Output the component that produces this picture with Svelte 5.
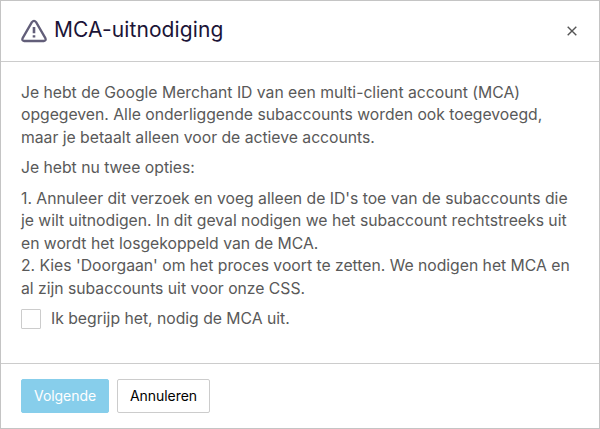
<script>
    let accepted = $state(false);
</script>

<main class="modal">
    <header>
        <svg class="warning" viewBox="0 0 26 24" aria-hidden="true">
            <path d="M10.9 3.1 L1.8 18.8 Q0.4 21.8 3.2 22 H22.8 Q25.6 21.8 24.2 18.8 L15.1 3.1 Q13 0.5 10.9 3.1 Z" />
            <path class="mark" d="M13 8 V14.2 M13 16.3 V18.5" />
        </svg>
        <h1>MCA-uitnodiging</h1>
        <button class="close" aria-label="Sluiten">
            <svg viewBox="0 0 10 10"><path d="M0.7 0.7 L9.3 9.3 M9.3 0.7 L0.7 9.3" /></svg>
        </button>
    </header>

    <section>
        <p>Je hebt de Google Merchant ID van een multi-client account (MCA) opgegeven. Alle onderliggende subaccounts worden ook toegevoegd, maar je betaalt alleen voor de actieve accounts.</p>
        <p>Je hebt nu twee opties:</p>
        <p>
            1. Annuleer dit verzoek en voeg alleen de ID's toe van de subaccounts die je wilt uitnodigen. In dit geval nodigen we het subaccount rechtstreeks uit en wordt het losgekoppeld van de MCA.<br>
            2. Kies 'Doorgaan' om het proces voort te zetten. We nodigen het MCA en al zijn subaccounts uit voor onze CSS.
        </p>
        <label>
            <input type="checkbox" bind:checked={accepted}>
            <span>Ik begrijp het, nodig de MCA uit.</span>
        </label>
    </section>

    <footer>
        <button class="primary" disabled={!accepted}>Volgende</button>
        <button class="secondary">Annuleren</button>
    </footer>
</main>

<style>
    :global(body) {
        background: #fff;
    }

    .modal {
        box-sizing: border-box;
        width: 600px;
        height: 429px;
        display: flex;
        flex-direction: column;
        border: 1px solid #c4c4c4;
        font-family: Inter, sans-serif;
        font-size: 15.75px;
        font-weight: 370;
        letter-spacing: -0.02px;
        line-height: 22.5px;
        color: #595959;
    }

    header {
        box-sizing: border-box;
        height: 61px;
        display: flex;
        align-items: center;
        padding: 0 20px;
        border-bottom: 1px solid #ccc;
    }

    .warning {
        width: 26px;
        height: 24px;
        margin-right: 7px;
        fill: none;
        stroke: #625e79;
        stroke-width: 2.3;
        stroke-linecap: round;
    }

    .warning .mark {
        stroke-width: 2.6;
        stroke-linecap: butt;
    }

    h1 {
        margin: 0 0 1px;
        font-size: 21px;
        font-weight: 370;
        letter-spacing: 0.1px;
        color: #1b1437;
    }

    .close {
        margin-left: auto;
        padding: 0;
        border: 0;
        background: none;
        display: flex;
    }

    .close svg {
        width: 10px;
        height: 10px;
        margin-right: 2.5px;
        stroke: #555;
        stroke-width: 1.4;
    }

    section {
        flex: 1;
        padding: 19.5px 20px 0;
    }

    p {
        margin: 0 0 8px;
    }

    label {
        display: flex;
        align-items: center;
        gap: 10px;
        margin-top: -0.5px;
    }

    input {
        appearance: none;
        box-sizing: border-box;
        width: 20px;
        height: 20px;
        margin: 0;
        border: 1px solid #ccc;
        border-radius: 1px;
        background: #fff;
    }

    input:checked {
        background: #87ceeb;
    }

    footer {
        box-sizing: border-box;
        height: 65px;
        display: flex;
        gap: 8px;
        padding: 15px 20px;
        border-top: 1px solid #ccc;
    }

    footer button {
        box-sizing: border-box;
        height: 34px;
        padding: 0 12px 1px;
        border: 1px solid #ccc;
        border-radius: 2px;
        background: #fff;
        font: 370 14px Inter, sans-serif;
        letter-spacing: -0.06px;
        color: #000;
    }

    footer .primary {
        border-color: #87ceeb;
        background: #87ceeb;
        color: #fff;
    }
</style>
